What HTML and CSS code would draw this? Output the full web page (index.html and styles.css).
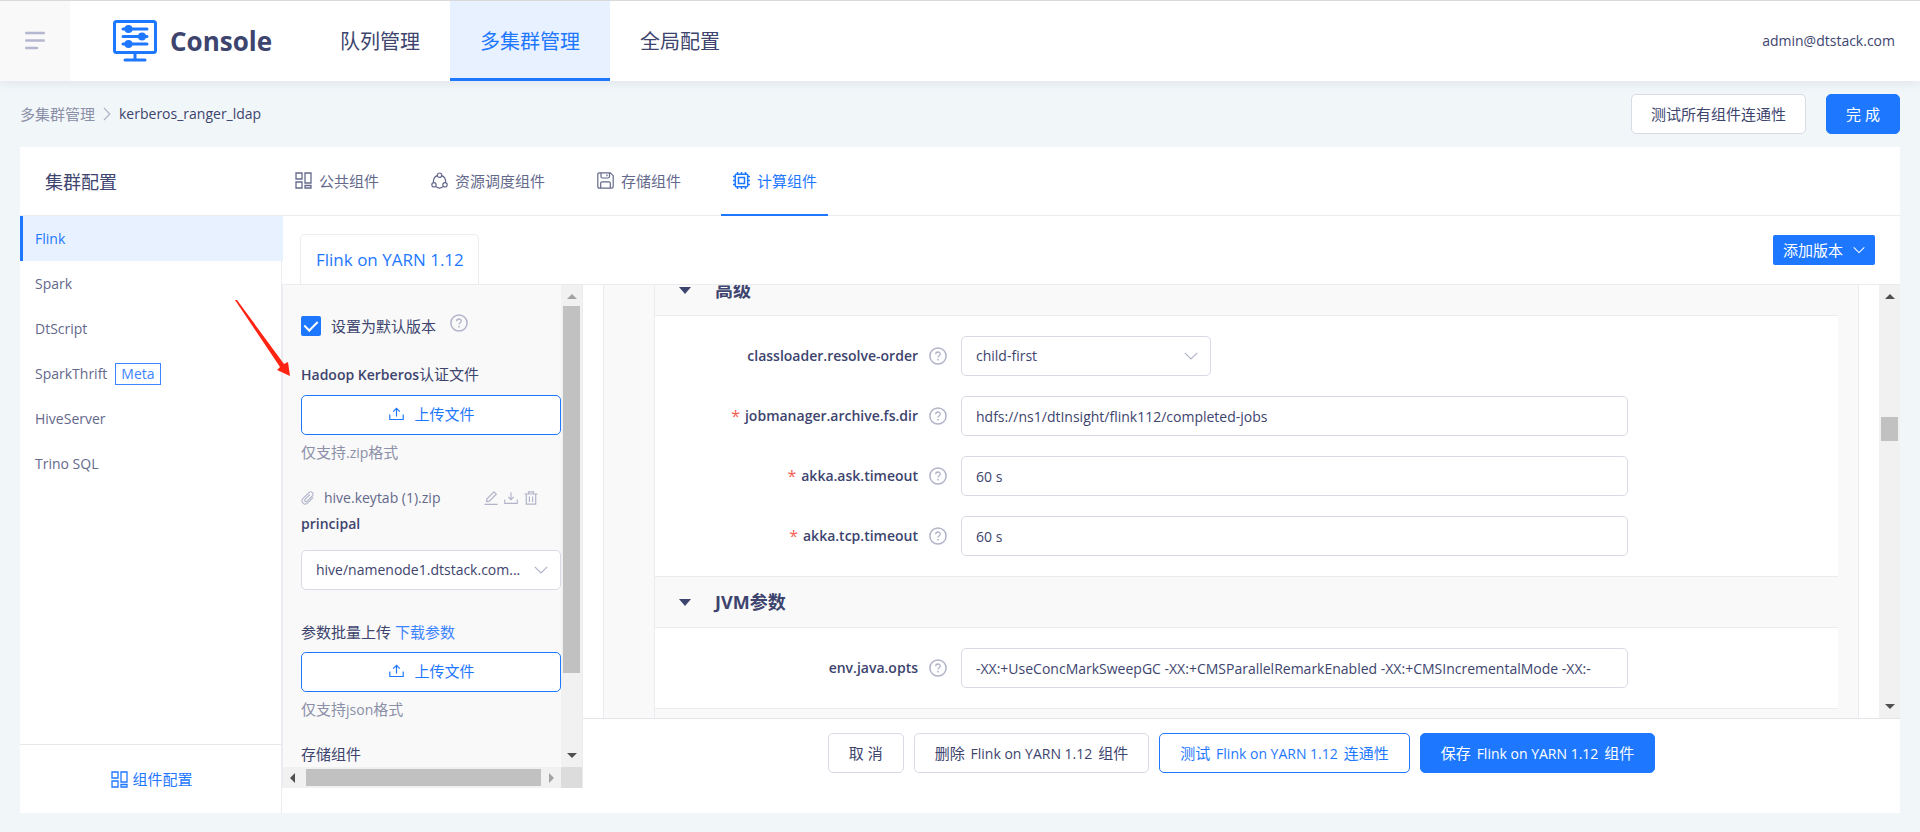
FILE: index.html
```html
<!DOCTYPE html>
<html lang="zh-CN">
<head>
<meta charset="utf-8">
<title>Console - 多集群管理</title>
<link rel="stylesheet" href="styles.css">
</head>
<body>
<svg class="sprite" aria-hidden="true">
  <symbol id="i-help" viewBox="0 0 18 18"><circle cx="9" cy="9" r="8.1" fill="none" stroke="currentColor" stroke-width="1.5"/><path d="M6.7 7.2C6.7 4.3 11.3 4.3 11.3 7.1C11.3 8.7 9 8.8 9 10.6" fill="none" stroke="currentColor" stroke-width="1.3"/><circle cx="9" cy="12.7" r=".9" fill="currentColor"/></symbol>
  <symbol id="i-down" viewBox="0 0 14 8"><path d="M.8 .9L7 7L13.200 .9" fill="none" stroke="currentColor" stroke-width="1.2"/></symbol>
  <symbol id="i-grid" viewBox="0 0 17 17"><path d="M1 1H7V7H1ZM10 1H16V11H10ZM1 10H7V16H1ZM10 13.500H16V16H10Z" fill="none" stroke="currentColor" stroke-width="1.3"/></symbol>
  <symbol id="i-nodes" viewBox="0 0 17 17"><g fill="none" stroke="currentColor" stroke-width="1.2"><circle cx="8.500" cy="3.200" r="2.200"/><circle cx="3" cy="12.800" r="2.200"/><circle cx="14" cy="12.800" r="2.200"/><path d="M6.200 3.600C3.500 4.700 2.200 7.200 2.400 10.500M10.800 3.600C13.500 4.700 14.800 7.200 14.600 10.500M5 14.800C7.200 16.400 9.800 16.400 12 14.800"/></g></symbol>
  <symbol id="i-save" viewBox="0 0 17 17"><g fill="none" stroke="currentColor" stroke-width="1.2"><path d="M2.500 .8H13.300L16.200 3.700V14.500Q16.200 16.200 14.500 16.200H2.500Q.8 16.200 .8 14.500V2.500Q.8 .8 2.500 .8Z"/><path d="M4 1V4.500Q4 6 5.500 6H11Q12.500 6 12.500 4.500V1M3.700 16V11Q3.700 9.800 5 9.800H12Q13.300 9.800 13.300 11V16M10 2.500V4.200"/></g></symbol>
  <symbol id="i-chip" viewBox="0 0 17 17"><g fill="none" stroke="currentColor" stroke-width="1.500"><rect x="2.300" y="2.300" width="12.400" height="12.400" rx="1"/><rect x="5.500" y="5.500" width="6" height="6"/><path d="M4.500 0V2.500M8.500 0V2.500M12.500 0V2.500M4.500 14.500V17M8.500 14.500V17M12.500 14.500V17M0 4.500H2.500M0 8.500H2.500M0 12.500H2.500M14.500 4.500H17M14.500 8.500H17M14.500 12.500H17"/></g></symbol>
  <symbol id="i-upload" viewBox="0 0 15 14"><path d="M.8 7.500V12.500H14.200V7.500M7.500 9.500V1.500M4.200 4.600L7.500 1.300L10.800 4.600" fill="none" stroke="currentColor" stroke-width="1.2"/></symbol>
  <symbol id="i-download" viewBox="0 0 15 14"><path d="M.8 8.500V12.700H14.200V8.500M7.500 .8V8.500M4.600 5.800L7.500 8.700L10.400 5.800" fill="none" stroke="currentColor" stroke-width="1.200"/></symbol>
  <symbol id="i-edit" viewBox="0 0 14 14"><path d="M.5 13.400H13.500M2.500 10.600L3 7.800L10 .9L12.300 3.200L5.300 10.200Z" fill="none" stroke="currentColor" stroke-width="1.200"/></symbol>
  <symbol id="i-trash" viewBox="0 0 14 14"><path d="M.5 3H13.500M4.500 3V.8H9.500V3M2.300 3V13.200H11.700V3M5.400 5.500V11M8.600 5.500V11" fill="none" stroke="currentColor" stroke-width="1.200"/></symbol>
  <symbol id="i-clip" viewBox="0 0 14 14"><path d="M12.200 6.300L6.800 11.900C3.400 15 -1 10.700 2.100 7.300L7.900 1.600C10.300 -.6 13.500 2.600 11.300 5L6.200 10.200C4.600 11.500 2.900 9.700 4.200 8.200L8.900 3.500" fill="none" stroke="currentColor" stroke-width="1.100"/></symbol>
</svg>

<header class="topbar">
  <button class="toggle" aria-label="菜单">
    <svg width="20" height="20" viewBox="0 0 20 20"><path d="M1.300 2H18.700M1.300 9.500H18.700M1.300 17H12" stroke="#b4b7cf" stroke-width="2.600" stroke-linecap="round"/></svg>
  </button>
  <a class="brand" href="#">
    <svg width="44" height="42" viewBox="0 0 44 42"><g stroke="#1e78ff" stroke-width="3" fill="none"><rect x="1.500" y="1.500" width="41" height="31" rx="2"/><path d="M22 33V40M12 40H32" stroke-linecap="round"/><path d="M10 9H34M10 16.500H34M10 24H34" stroke-linecap="round"/></g><g fill="#1e78ff"><circle cx="15.500" cy="9" r="4"/><circle cx="29" cy="16.500" r="4"/><circle cx="15.500" cy="24" r="4"/></g></svg>
    <span>Console</span>
  </a>
  <nav class="mainnav">
    <a href="#">队列管理</a>
    <a href="#" class="on">多集群管理</a>
    <a href="#">全局配置</a>
  </nav>
  <span class="user">admin@dtstack.com</span>
</header>

<div class="crumbs">
  <a href="#">多集群管理</a>
  <svg width="8" height="14" viewBox="0 0 8 14"><path d="M1 1L6.800 7L1 13" fill="none" stroke="#b1b4c5" stroke-width="1.200"/></svg>
  <span class="lat">kerberos_ranger_ldap</span>
  <div class="crumb-actions">
    <button class="btn">测试所有组件连通性</button>
    <button class="btn primary">完 成</button>
  </div>
</div>

<main class="panel">
  <div class="tabrow">
    <h2>集群配置</h2>
    <nav class="tabs">
      <a href="#"><svg class="ic"><use href="#i-grid"/></svg>公共组件</a>
      <a href="#"><svg class="ic"><use href="#i-nodes"/></svg>资源调度组件</a>
      <a href="#"><svg class="ic"><use href="#i-save"/></svg>存储组件</a>
      <a href="#" class="on"><svg class="ic"><use href="#i-chip"/></svg>计算组件</a>
    </nav>
  </div>
  <div class="body">
    <aside class="side">
      <a href="#" class="on">Flink</a>
      <a href="#">Spark</a>
      <a href="#">DtScript</a>
      <a href="#">SparkThrift <span class="meta">Meta</span></a>
      <a href="#">HiveServer</a>
      <a href="#">Trino SQL</a>
      <button class="side-foot"><svg class="ic"><use href="#i-grid"/></svg>组件配置</button>
    </aside>
    <section class="work">
      <div class="versions">
        <a href="#" class="vtab">Flink on YARN 1.12</a>
        <button class="add">添加版本<svg class="chev"><use href="#i-down"/></svg></button>
      </div>
      <div class="split">
        <div class="files">
          <div class="files-body">
            <div class="default">
              <input type="checkbox" id="def" checked><label for="def">设置为默认版本</label>
              <svg class="help"><use href="#i-help"/></svg>
            </div>
            <h3><span class="lat">Hadoop Kerberos</span>认证文件</h3>
            <button class="upload"><svg class="up"><use href="#i-upload"/></svg>上传文件</button>
            <p class="hint">仅支持<span class="lat">.zip</span>格式</p>
            <div class="file">
              <svg class="mini"><use href="#i-clip"/></svg><span>hive.keytab (1).zip</span>
              <button aria-label="编辑"><svg class="mini"><use href="#i-edit"/></svg></button>
              <button aria-label="下载"><svg class="mini"><use href="#i-download"/></svg></button>
              <button aria-label="删除"><svg class="mini"><use href="#i-trash"/></svg></button>
            </div>
            <label class="principal" for="prin">principal</label>
            <div class="select"><select id="prin"><option>hive/namenode1.dtstack.com...</option></select><svg class="chev"><use href="#i-down"/></svg></div>
            <h3 class="params">参数批量上传 <a href="#">下载参数</a></h3>
            <button class="upload"><svg class="up"><use href="#i-upload"/></svg>上传文件</button>
            <p class="hint">仅支持<span class="lat">json</span>格式</p>
            <h3 class="storage">存储组件</h3>
          </div>
          <div class="vbar"><i class="tri up-t soft"></i><div class="thumb"></div><i class="tri down-t"></i></div>
          <div class="hbar"><i class="tri left-t"></i><div class="thumb"></div><i class="tri right-t soft"></i></div>
          <div class="corner"></div>
        </div>
        <div class="config">
          <div class="scroll">
            <div class="box">
              <div class="groups">
                <h4 class="first"><i class="caret"></i>高级</h4>
                <div class="rows">
                  <div class="row"><label for="f1">classloader.resolve-order<svg class="help"><use href="#i-help"/></svg></label><div class="select short"><select id="f1"><option>child-first</option></select><svg class="chev"><use href="#i-down"/></svg></div></div>
                  <div class="row"><label for="f2" class="req">jobmanager.archive.fs.dir<svg class="help"><use href="#i-help"/></svg></label><input id="f2" value="hdfs://ns1/dtInsight/flink112/completed-jobs"></div>
                  <div class="row"><label for="f3" class="req">akka.ask.timeout<svg class="help"><use href="#i-help"/></svg></label><input id="f3" value="60 s"></div>
                  <div class="row"><label for="f4" class="req">akka.tcp.timeout<svg class="help"><use href="#i-help"/></svg></label><input id="f4" value="60 s"></div>
                </div>
                <h4><i class="caret"></i>JVM参数</h4>
                <div class="rows">
                  <div class="row"><label for="f5">env.java.opts<svg class="help"><use href="#i-help"/></svg></label><input id="f5" value="-XX:+UseConcMarkSweepGC -XX:+CMSParallelRemarkEnabled -XX:+CMSIncrementalMode -XX:-"></div>
                </div>
              </div>
            </div>
            <div class="vbar main-bar"><i class="tri up-t"></i><div class="thumb"></div><i class="tri down-t"></i></div>
          </div>
          <div class="actions">
            <button class="btn">取 消</button>
            <button class="btn">删除 <span class="lat">Flink on YARN 1.12</span> 组件</button>
            <button class="btn ghost">测试 <span class="lat">Flink on YARN 1.12</span> 连通性</button>
            <button class="btn primary">保存 <span class="lat">Flink on YARN 1.12</span> 组件</button>
          </div>
        </div>
      </div>
    </section>
  </div>
</main>
<svg class="pointer" width="58" height="80" viewBox="0 0 58 80"><path d="M1 1L3 1L50 65L54 63L56 77L43 71L46 68Z" fill="#ff2412"/></svg>
</body>
</html>
```
FILE: styles.css
```css
* { box-sizing: border-box; }
body {
  margin: 0;
  height: 100vh;
  display: flex;
  flex-direction: column;
  overflow: hidden;
  background: #f1f6f9;
  color: #3d446e;
  font: 15px/20px "Open Sans", "Noto Sans CJK SC", sans-serif;
}
a { color: inherit; text-decoration: none; }
button, input, select { font: inherit; color: inherit; margin: 0; }
button { border: 0; background: none; padding: 0; cursor: pointer; }
h2, h3, h4, p { margin: 0; font-weight: 400; }
svg { flex: none; display: block; }
.sprite { position: absolute; width: 0; height: 0; }
.lat { font-size: 14px; }

.topbar {
  height: 81px;
  flex: none;
  display: flex;
  background: #fff;
  border-top: 1px solid #d9d9d9;
  box-shadow: 0 2px 10px rgba(60, 80, 120, .1);
}
.toggle { width: 70px; display: grid; place-items: center; background: #f9f9f9; }
.brand { width: 240px; padding-left: 43px; display: flex; align-items: center; gap: 13px; font-size: 26px; font-weight: 700; }
.mainnav { display: flex; font-size: 20px; }
.mainnav a { padding: 5px 30px 0; display: flex; align-items: center; border-bottom: 3px solid transparent; }
.mainnav .on { background: #e8f1ff; color: #1e78ff; border-color: #1e78ff; }
.user { margin-left: auto; padding-right: 25px; align-self: center; font-size: 14px; }

.crumbs { height: 66px; flex: none; padding: 0 20px; display: flex; align-items: center; gap: 8px; }
.crumbs a { color: #8b8fa8; }
.crumb-actions { margin-left: auto; display: flex; gap: 20px; }
.btn { height: 40px; padding: 0 19px; border: 1px solid #d8dae6; border-radius: 5px; background: #fff; white-space: nowrap; }
.btn.primary { background: #1e78ff; border-color: #1e78ff; color: #fff; }
.btn.ghost { border-color: #1e78ff; color: #1e78ff; }

.panel { flex: 1; min-height: 0; margin: 0 20px 19px; display: flex; flex-direction: column; background: #fff; }
.tabrow { height: 69px; flex: none; display: flex; border-bottom: 1px solid #ebecf0; }
.tabrow h2 { width: 263px; padding: 2px 0 0 25px; align-self: center; font-size: 18px; }
.tabs { display: flex; gap: 29px; color: #64698b; }
.tabs a { display: flex; align-items: center; gap: 7px; padding: 0 11px 0 12px; margin-bottom: -1px; border-bottom: 2px solid transparent; }
.tabs .on { color: #1e78ff; border-color: #1e78ff; }
.ic { width: 17px; height: 17px; }

.body { flex: 1; min-height: 0; display: flex; }
.side { width: 262px; flex: none; display: flex; flex-direction: column; border-right: 1px solid #ebecf0; font-size: 14px; color: #64698b; }
.side a { height: 45px; padding-left: 15px; display: flex; align-items: center; gap: 8px; }
.side .on { margin-right: -2px; padding-left: 12px; border-left: 3px solid #1e78ff; background: #e8f1ff; color: #1e78ff; z-index: 1; }
.meta { padding: 0 5px; border: 1px solid #3d84ff; color: #3d84ff; line-height: 20px; }
.side-foot { margin-top: auto; height: 69px; padding-left: 3px; display: flex; align-items: center; justify-content: center; gap: 4px; border-top: 1px solid #e8e8e8; color: #1e78ff; font-size: 15px; }

.work { flex: 1; min-width: 0; display: flex; flex-direction: column; }
.versions { height: 69px; flex: none; padding: 18px 25px 0 18px; display: flex; justify-content: space-between; border-bottom: 1px solid #ebecf0; }
.vtab { padding: 0 14px 0 15px; display: flex; align-items: center; border: 1px solid #ebecf0; border-bottom: 0; border-radius: 5px 5px 0 0; color: #1e78ff; font-size: 17px; }
.add { height: 30px; margin-top: 1px; padding: 0 10px; display: flex; align-items: center; gap: 10px; border-radius: 2px; background: #1e78ff; color: #fff; }
.chev { width: 12px; height: 8px; }

.split { flex: 1; min-height: 0; display: flex; }
.files {
  width: 301px;
  flex: none;
  margin-bottom: 25px;
  display: grid;
  grid-template: minmax(0, 1fr) 21px / minmax(0, 1fr) 21px;
  background: #f9f9f9;
  border: solid #ebecf0;
  border-width: 0 1px;
}
.files-body { padding: 29px 0 0 18px; overflow: hidden; display: flex; flex-direction: column; }
.files-body > * { flex: none; }
.default { height: 22px; display: flex; align-items: flex-end; gap: 10px; }
.default input { appearance: none; width: 20px; height: 20px; border-radius: 2px; background: #1e78ff; display: grid; place-items: center; }
.default input::before { content: ""; width: 6px; height: 11px; margin-bottom: 4px; border: solid #fff; border-width: 0 2px 2px 0; transform: rotate(45deg); }
.help { width: 18px; height: 18px; color: #b1b4c9; }
.default .help { align-self: flex-start; margin-left: 4px; }
.files h3 { margin: 28px 0 10px; font-size: 15px; line-height: 20px; }
.files h3 .lat { font-weight: 600; }
.upload { height: 40px; padding: 0 0 2px 2px; display: flex; align-items: center; justify-content: center; gap: 10px; border: 1px solid #1e78ff; border-radius: 5px; background: #fff; color: #1e78ff; }
.up { width: 15px; height: 14px; }
.hint { margin-top: 7px; color: #8b8fa8; }
.file { height: 24px; margin-top: 23px; padding-right: 23px; display: flex; align-items: center; gap: 6px; font-size: 14px; color: #64698b; }
.file span { flex: 1; padding-left: 3px; }
.mini { width: 14px; height: 14px; color: #b1b4c9; }
.principal { margin: 4px 0 16px; font-size: 14px; font-weight: 600; }
.select { position: relative; }
.select select, .row input { width: 100%; height: 40px; padding: 0 14px; appearance: none; display: block; border: 1px solid #d8dae6; border-radius: 5px; background: #fff; font-size: 14px; }
.select .chev { position: absolute; right: 13px; top: 16px; width: 14px; color: #b1b4c9; pointer-events: none; }
.files .params { margin: 32px 0 10px; }
.params a { color: #3d84ff; }
.files .storage { margin: 24px 0 0; }

.vbar { display: flex; flex-direction: column; align-items: center; background: #f1f1f1; }
.thumb { background: #c1c1c1; }
.vbar .thumb { width: 17px; height: 367px; margin-top: 7px; }
.hbar { padding-left: 2px; display: flex; align-items: center; background: #f1f1f1; }
.hbar .thumb { flex: 1; height: 17px; margin: 0 8px 0 11px; }
.corner { background: #dcdcdc; }
.tri { border: 5px solid transparent; }
.up-t { margin-top: 4px; border-bottom-color: #505050; }
.down-t { margin: auto 0 4px; border-top-color: #505050; }
.left-t { border-right-color: #505050; }
.right-t { margin-right: 2px; border-left-color: #505050; }
.up-t.soft { border-bottom-color: #a3a3a3; }
.right-t.soft { border-left-color: #a3a3a3; }

.config { flex: 1; min-width: 0; display: flex; flex-direction: column; }
.scroll { flex: 1; min-height: 0; display: flex; gap: 20px; overflow: hidden; }
.box { flex: 1; min-width: 0; margin-left: 20px; padding: 0 20px 0 50px; background: #f9f9f9; border: solid #ebecf0; border-width: 0 1px; }
.groups { min-height: 100%; display: flow-root; margin-top: -20px; padding-bottom: 20px; border-left: 1px solid #ebecf0; }
.groups h4 { height: 50px; padding-left: 24px; display: flex; align-items: center; gap: 24px; font-size: 18px; font-weight: 700; }
.caret { width: 12px; border: 6px solid transparent; border-top: 7px solid #3d446e; border-bottom: 0; }
.rows { padding: 20px 0; display: grid; gap: 20px; background: #fff; border: solid #ebecf0; border-width: 1px 0; }
.row { display: grid; grid-template-columns: 306px minmax(0, 667px); align-items: center; }
.row label { padding-right: 14px; display: flex; justify-content: flex-end; align-items: center; gap: 11px; font-size: 14px; font-weight: 600; }
.req::before { content: "*"; margin-right: -6px; color: #f5604f; font-size: 16px; font-weight: 400; }
.short { width: 250px; }
.main-bar { width: 21px; }
.main-bar .thumb { height: 24px; margin-top: 118px; }
.actions { height: 95px; flex: none; padding-top: 14px; display: flex; justify-content: center; align-items: flex-start; gap: 10px; border-top: 1px solid #e4e4e8; }
.actions .btn { padding: 0 20px; }
.actions .lat { margin: 0 2px; }

.pointer { position: absolute; left: 234px; top: 299px; }
```
